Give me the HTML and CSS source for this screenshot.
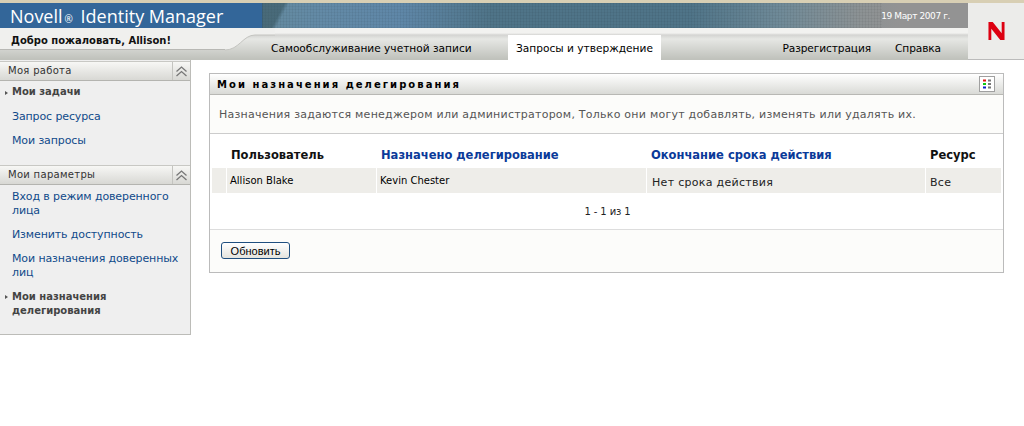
FILE: index.html
```html
<!DOCTYPE html>
<html lang="ru">
<head>
<meta charset="utf-8">
<title>Novell Identity Manager</title>
<link rel="stylesheet" href="styles.css">
</head>
<body>
<header class="header">
  <div class="header-main">
    <div class="banner">
      <div class="brand">Novell<span class="reg">®</span> Identity Manager</div>
      <div class="date">19 Март 2007 г.</div>
    </div>
    <div class="navbar">
      <div class="welcome">Добро пожаловать, Allison!</div>
      <svg class="curve" width="50" height="31" viewBox="0 0 50 31" aria-hidden="true">
        <path class="curve-fill" d="M0 0H50V7H30C18 7 14 22 0 22Z"/>
        <path class="curve-line" d="M50 7H30C18 7 14 22 0 22"/>
      </svg>
      <nav class="tabs">
        <a class="tab">Самообслуживание учетной записи</a>
        <a class="tab tab-active">Запросы и утверждение</a>
        <span class="tabs-gap"></span>
        <a class="tab tab-util">Разрегистрация</a>
        <a class="tab tab-help">Справка</a>
      </nav>
    </div>
  </div>
  <div class="logo">
    <svg width="17" height="20" viewBox="0 0 18 20" aria-hidden="true"><path class="logo-n" d="M0.500 0.500H5L14.500 12.500V0.500H17.500V19.500H13L3.500 7.500V19.500H0.500Z"/></svg>
  </div>
</header>
<div class="content">
  <aside class="sidebar">
    <div class="side-head side-head-first"><span class="side-title">Моя работа</span><span class="collapse"><svg width="13" height="11" viewBox="0 0 13 11"><path class="chev" d="M1.5 5.5L6.5 1L11.5 5.5M1.5 10L6.5 5.500L11.500 10"/></svg></span></div>
    <ul class="side-list first">
      <li class="side-item current">Мои задачи</li>
      <li class="side-item">Запрос ресурса</li>
      <li class="side-item">Мои запросы</li>
    </ul>
    <div class="side-head"><span class="side-title">Мои параметры</span><span class="collapse"><svg width="13" height="11" viewBox="0 0 13 11"><path class="chev" d="M1.5 5.5L6.5 1L11.5 5.5M1.5 10L6.5 5.500L11.500 10"/></svg></span></div>
    <ul class="side-list">
      <li class="side-item">Вход в режим доверенного лица</li>
      <li class="side-item">Изменить доступность</li>
      <li class="side-item">Мои назначения доверенных лиц</li>
      <li class="side-item current">Мои назначения делегирования</li>
    </ul>
  </aside>
  <main class="main">
    <section class="panel">
      <div class="panel-head">
        <h1 class="panel-title">Мои назначения делегирования</h1>
        <span class="panel-icon">
          <svg width="13" height="13" viewBox="0 0 13 13" aria-hidden="true">
            <rect class="s-r" x="2" y="1.500" width="3" height="2"/><rect class="s-g" x="2" y="5" width="3" height="2"/><rect class="s-b" x="2" y="8.500" width="3" height="2"/>
            <rect class="s-k" x="7" y="1.500" width="3" height="2"/><rect class="s-k" x="7" y="5" width="3" height="2"/><rect class="s-k" x="7" y="8.500" width="3" height="2"/>
          </svg>
        </span>
      </div>
      <p class="panel-note">Назначения задаются менеджером или администратором, Только они могут добавлять, изменять или удалять их.</p>
      <div class="table-wrap">
        <table class="grid">
          <thead>
            <tr>
              <th class="c0"></th>
              <th class="c1">Пользователь</th>
              <th class="c2 sortable">Назначено делегирование</th>
              <th class="c3 sortable">Окончание срока действия</th>
              <th class="c4">Ресурс</th>
            </tr>
          </thead>
          <tbody>
            <tr>
              <td></td>
              <td class="latin">Allison Blake</td>
              <td class="latin">Kevin Chester</td>
              <td class="low low-wide">Нет срока действия</td>
              <td class="low">Все</td>
            </tr>
          </tbody>
        </table>
        <div class="pager">1 - 1 из 1</div>
      </div>
      <div class="panel-foot"><button class="btn" type="button">Обновить</button></div>
    </section>
  </main>
</div>
</body>
</html>
```
FILE: styles.css
```css
* { box-sizing: border-box; }
html, body { margin: 0; padding: 0; }
body { background: #fff; color: #000; font-family: "DejaVu Sans", Verdana, sans-serif; font-size: 11px; width: 1024px; height: 426px; overflow: hidden; }

.header { display: flex; height: 60px; background: linear-gradient(#d8cfb4 0, #d8cfb4 3px, transparent 3px); }
.header-main { flex: 1; min-width: 0; display: flex; flex-direction: column; padding-top: 3px; }
.banner { position: relative; height: 25px; display: flex; justify-content: space-between; align-items: center; padding: 0 18px 0 10px;
  background: linear-gradient(90deg, #336699 0, #336699 262px, #648a9e 263px, #638aa6 320px, #5f87a8 400px, #4f7488 490px, #4f7488 690px, #6f8a98 780px, #8c9294 860px, #939393 900px); }
.banner::before { content: ""; position: absolute; left: 262px; top: 0; bottom: 0; width: 620px;
  background:
    linear-gradient(118deg, rgba(50,80,90,.55) 0, rgba(50,80,90,.55) 20px, transparent 24px),
    repeating-linear-gradient(90deg, rgba(0,0,0,.05) 0, rgba(0,0,0,.05) 1px, transparent 1px, transparent 3px),
    repeating-linear-gradient(0deg, rgba(0,0,0,.04) 0, rgba(0,0,0,.04) 1px, transparent 1px, transparent 3px); }
.brand { position: relative; color: #fff; font-family: "Open Sans", sans-serif; font-size: 18px; letter-spacing: 0; white-space: nowrap; }
.reg { font-size: 10px; margin: 0 3px 0 2px; }
.date { position: relative; color: #fff; font-size: 9px; letter-spacing: -0.4px; }
.navbar { position: relative; flex: 1; display: flex; background: linear-gradient(#f2f2f0 0, #f2f2f0 5px, #d4d4d2 7px, #e6e7e4 11px, #c0c2bc 31px); }
.welcome { position: relative; z-index: 2; width: 225px; height: 22px; padding: 7px 0 0 11px; font-size: 10px; font-weight: bold; color: #111; white-space: nowrap; background: #f0f0ee; border-bottom: 1px solid #b8b8b4; }
.curve { position: absolute; left: 225px; top: 0; z-index: 1; }
.curve-fill { fill: #f0f0ee; }
.curve-line { fill: none; stroke: #c4c4c0; stroke-width: 1; }
.tabs { position: absolute; left: 260px; right: 0; top: 7px; bottom: 0; display: flex; z-index: 3; }
.tab { display: block; padding: 7px 0 0; font-size: 10.600px; color: #000; white-space: nowrap; }
.tab:first-child { width: 248px; padding-left: 11px; }
.tab-active { width: 153px; background: #fff; text-align: center; height: 25px; }
.tabs-gap { flex: 1; }
.tab-util { margin-right: 24px; letter-spacing: -0.100px; }
.tab-help { margin-right: 27px; letter-spacing: -0.100px; }
.logo { width: 56px; height: 57px; margin-top: 3px; background: #ececea; border-bottom: 1px solid #bbb; display: flex; align-items: center; justify-content: center; }
.logo-n { fill: #dd0011; }

.content { display: flex; align-items: flex-start; }
.sidebar { width: 191px; height: 275px; background: #efefef; border-right: 1px solid #bcbcb8; border-bottom: 1px solid #bcbcb8; flex: none; }
.side-head { display: flex; height: 20px; background: linear-gradient(#f7f7f5, #d8d8d4); border-bottom: 1px solid #b4b4b0; border-top: 1px solid #c8c8c4; }
.side-head-first { margin-top: 1px; }
.side-title { flex: 1; padding: 3px 0 0 8px; font-size: 10px; letter-spacing: 0.3px; color: #333; }
.collapse { width: 18px; border-left: 1px solid #c4c4c0; display: flex; align-items: center; justify-content: center; }
.chev { fill: none; stroke: #777; stroke-width: 1.300; }
.side-list { list-style: none; margin: 0; padding: 0 0 0 12px; }
.side-list.first { height: 84px; }
.side-list.first .side-item { height: 24px; }
.side-list.first .side-item.current { padding-top: 4px; }
.side-item { position: relative; color: #0f4a8a; font-size: 11px; letter-spacing: -0.120px; line-height: 14px; padding: 5px 0; }
.side-item.current { color: #444; font-size: 10px; font-weight: bold; letter-spacing: 0; }
.side-item.current::before { content: ""; position: absolute; left: -7px; top: 10px; border-left: 3px solid #555; border-top: 2px solid transparent; border-bottom: 2px solid transparent; }

.main { flex: 1; padding: 13px 20px 0 18px; }
.panel { border: 1px solid #bbb; background: #fcfcfa; height: 200px; display: flex; flex-direction: column; }
.panel-head { height: 21px; display: flex; align-items: center; justify-content: space-between; padding: 0 8px 0 7px; background: linear-gradient(#fff, #d9dad6); border-bottom: 1px solid #b8b8b4; }
.panel-title { margin: 0; font-size: 10px; font-weight: bold; letter-spacing: 2.050px; color: #000; white-space: nowrap; }
.panel-icon { width: 16px; height: 16px; border: 1px solid #a0a0a0; background: #fff; display: flex; align-items: center; justify-content: center; }
.s-r { fill: #e01010; } .s-g { fill: #10c810; } .s-b { fill: #1020c8; } .s-k { fill: #777; }
.panel-note { margin: 0; height: 39px; padding: 13px 0 0 9px; font-size: 11px; letter-spacing: 0.240px; color: #555; white-space: nowrap; border-bottom: 1px solid #ccc; }
.table-wrap { background: #fff; height: 96px; padding-top: 10px; border-bottom: 1px solid #ddd; }
.grid { border-collapse: separate; border-spacing: 0; table-layout: fixed; width: 789px; margin-left: 2px; }
.grid th { height: 24px; text-align: left; font-size: 11.500px; font-weight: bold; color: #111; padding: 0 0 2px 5px; white-space: nowrap; }
.grid th.sortable { color: #0b3a99; }
.c0 { width: 14px; } .c1 { width: 150px; } .c2 { width: 270px; } .c3 { width: 279px; } .c4 { width: 76px; }
.grid td { height: 25px; background: #eeede9; border-left: 1px solid #fff; padding: 0 0 0 3px; font-size: 10px; white-space: nowrap; }
.grid td:first-child { border-left: 0; }
.grid td.low { font-size: 11px; letter-spacing: 0.300px; color: #222; padding: 3px 0 0 4px; }
.grid td.low-wide { padding-left: 5px; }
.pager { text-align: center; font-size: 10px; letter-spacing: -0.100px; padding-top: 13px; margin-left: 2px; color: #222; }
.panel-foot { flex: 1; padding: 12px 0 0 11px; }
.btn { display: block; width: 69px; height: 17px; padding: 0; border: 1px solid #1f4f7f; border-radius: 3px; background: linear-gradient(#fff, #e4e4de); font-family: "Liberation Sans", sans-serif; font-size: 11px; line-height: 14px; color: #000; }
```
